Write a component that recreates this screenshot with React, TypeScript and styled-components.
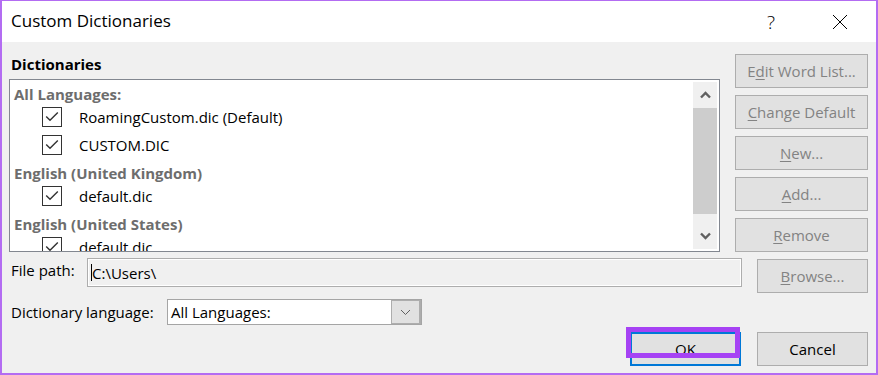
import React from "react";
import styled, { createGlobalStyle } from "styled-components";

const GlobalStyle = createGlobalStyle`
  html, body {
    margin: 0;
    padding: 0;
    background: #ffffff;
  }
  body {
    font-family: "Open Sans", "Noto Sans", sans-serif;
  }
`;

const Frame = styled.div`
  width: 878px;
  height: 375px;
  box-sizing: border-box;
  border: 2px solid #b36cf2;
  border-top-width: 1px;
  background: #f0f0f0;
  display: flex;
  flex-direction: column;
  font-family: "Open Sans", "Noto Sans", sans-serif;
  color: #000;
  overflow: hidden;
`;

const TitleBar = styled.div`
  height: 41px;
  flex: none;
  background: #ffffff;
  display: flex;
  align-items: center;
  padding: 0 13px 0 9px;
`;

const Title = styled.div`
  flex: 1;
  font-size: 17px;
  line-height: 24px;
  margin-top: -1px;
`;

const TitleButton = styled.div`
  width: 46px;
  height: 30px;
  display: flex;
  align-items: center;
  justify-content: center;
  font-size: 19px;
  font-weight: 300;
`;

const Body = styled.div`
  flex: 1;
  display: flex;
  flex-direction: column;
  padding: 12px 8px 7px 7px;
`;

const Main = styled.div`
  display: flex;
  gap: 15px;
`;

const LeftColumn = styled.div`
  flex: 1;
  display: flex;
  flex-direction: column;
`;

const Heading = styled.div`
  font-size: 15px;
  font-weight: 700;
  line-height: 20px;
  height: 25px;
  padding-left: 2px;
`;

const ListBox = styled.div`
  height: 173px;
  box-sizing: border-box;
  border: 1px solid #828790;
  background: #ffffff;
  display: flex;
`;

const ListContent = styled.div`
  flex: 1;
  overflow: hidden;
`;

const GroupRow = styled.div`
  height: 23px;
  box-sizing: border-box;
  padding: 5px 0 0 4px;
  font-size: 15px;
  font-weight: 700;
  line-height: 18px;
  color: #6d6d6d;
`;

const ItemRow = styled.div`
  height: 28px;
  display: flex;
  align-items: center;
  padding-left: 32px;
  gap: 17px;
  font-size: 15px;
`;

const CheckBox = styled.span`
  width: 20px;
  height: 20px;
  box-sizing: border-box;
  border: 1px solid #333333;
  background: #fff;
  display: flex;
  align-items: center;
  justify-content: center;
`;

const ScrollBar = styled.div`
  width: 24px;
  margin: 2px 2px 2px 0;
  background: #f0f0f0;
  display: flex;
  flex-direction: column;
`;

const ScrollArrow = styled.div`
  height: 26px;
  display: flex;
  align-items: center;
  justify-content: center;
`;

const ScrollThumb = styled.div`
  height: 106px;
  background: #cdcdcd;
`;

const ScrollGap = styled.div`
  flex: 1;
`;

const ButtonColumn = styled.div`
  width: 133px;
  display: flex;
  flex-direction: column;
  gap: 7px;
`;

const Button = styled.button<{ $disabled?: boolean; $default?: boolean; $width?: number }>`
  width: ${(p) => (p.$width ? `${p.$width}px` : "100%")};
  height: 34px;
  box-sizing: border-box;
  background: #e1e1e1;
  border: ${(p) => (p.$default ? "2px solid #0078d7" : "1px solid #adadad")};
  color: ${(p) => (p.$disabled ? "#838383" : "#000")};
  font-family: "Open Sans", "Noto Sans", sans-serif;
  font-size: 15px;
  padding: 0;
  flex: none;
  position: relative;

  u {
    text-decoration-thickness: 1px;
    text-underline-offset: 2px;
  }
`;

const FieldRow = styled.div<{ $top: number }>`
  display: flex;
  align-items: flex-start;
  margin-top: ${(p) => p.$top}px;
`;

const Label = styled.div<{ $width: number; $lh: number }>`
  width: ${(p) => p.$width}px;
  flex: none;
  box-sizing: border-box;
  padding-left: 2px;
  font-size: 15px;
  line-height: ${(p) => p.$lh}px;
`;

const PathInput = styled.div`
  flex: 1;
  height: 29px;
  box-sizing: border-box;
  border: 1px solid #adadad;
  box-shadow: inset 0 0 0 1px #ffffff;
  background: #f0f0f0;
  display: flex;
  align-items: center;
  padding-left: 3px;
  font-size: 15px;
  margin-right: 15px;
`;

const Caret = styled.span`
  width: 1px;
  height: 17px;
  background: #000;
`;

const Combo = styled.div`
  width: 255px;
  height: 26px;
  box-sizing: border-box;
  border: 1px solid #a5a5a5;
  background: #fff;
  display: flex;
`;

const ComboText = styled.div`
  flex: 1;
  padding-left: 3px;
  font-size: 15px;
  line-height: 24px;
`;

const ComboButton = styled.div`
  width: 27px;
  background: #e1e1e1;
  border: 1px solid #adadad;
  border-right-width: 2px;
  display: flex;
  align-items: center;
  justify-content: center;
`;

const Footer = styled.div`
  display: flex;
  justify-content: flex-end;
  gap: 16px;
  margin-top: 7px;
`;

const Highlight = styled.span`
  position: absolute;
  left: -6px;
  top: -7px;
  width: 114px;
  height: 31px;
  box-sizing: border-box;
  border: 5px solid #a642f4;
  pointer-events: none;
`;

const Check = () => (
  <svg width="18" height="18" viewBox="0 0 18 18">
    <polyline points="3.2,8.5 7,12.3 14.8,4.5" fill="none" stroke="#333" strokeWidth="1.4" />
  </svg>
);

const Chevron = ({ up }: { up?: boolean }) => (
  <svg width="11" height="8" viewBox="0 0 11 8">
    <polyline
      points={up ? "1,6.5 5.5,2 10,6.5" : "1,1.5 5.5,6 10,1.5"}
      fill="none"
      stroke="#606060"
      strokeWidth="2.4"
    />
  </svg>
);

const groups = [
  { name: "All Languages:", files: ["RoamingCustom.dic (Default)", "CUSTOM.DIC"] },
  { name: "English (United Kingdom)", files: ["default.dic"] },
  { name: "English (United States)", files: ["default.dic"] },
];

export default function App() {
  return (
    <>
      <GlobalStyle />
      <Frame>
        <TitleBar>
          <Title>Custom Dictionaries</Title>
          <TitleButton>?</TitleButton>
          <div style={{ width: 23 }} />
          <TitleButton>
            <svg width="16" height="16" viewBox="0 0 16 16">
              <path d="M1 1 L15 15 M15 1 L1 15" stroke="#000" strokeWidth="1" />
            </svg>
          </TitleButton>
        </TitleBar>
        <Body>
          <Main>
            <LeftColumn>
              <Heading>Dictionaries</Heading>
              <ListBox>
                <ListContent>
                  {groups.map((g) => (
                    <React.Fragment key={g.name}>
                      <GroupRow>{g.name}</GroupRow>
                      {g.files.map((f) => (
                        <ItemRow key={f}>
                          <CheckBox>
                            <Check />
                          </CheckBox>
                          {f}
                        </ItemRow>
                      ))}
                    </React.Fragment>
                  ))}
                </ListContent>
                <ScrollBar>
                  <ScrollArrow>
                    <Chevron up />
                  </ScrollArrow>
                  <ScrollThumb />
                  <ScrollGap />
                  <ScrollArrow>
                    <Chevron />
                  </ScrollArrow>
                </ScrollBar>
              </ListBox>
            </LeftColumn>
            <ButtonColumn>
              <Button $disabled>
                E<u>d</u>it Word List...
              </Button>
              <Button $disabled>
                <u>C</u>hange Default
              </Button>
              <Button $disabled>
                <u>N</u>ew...
              </Button>
              <Button $disabled>
                <u>A</u>dd...
              </Button>
              <Button $disabled>
                <u>R</u>emove
              </Button>
            </ButtonColumn>
          </Main>
          <FieldRow $top={6}>
            <Label $width={78} $lh={24}>
              File path:
            </Label>
            <PathInput>
              <Caret />
              C:\Users\
            </PathInput>
            <Button $disabled $width={111} style={{ marginTop: 1 }}>
              <u>B</u>rowse...
            </Button>
          </FieldRow>
          <FieldRow $top={6}>
            <Label $width={158} $lh={26}>
              Dictionary language:
            </Label>
            <Combo>
              <ComboText>All Languages:</ComboText>
              <ComboButton>
                <svg width="11" height="7" viewBox="0 0 11 7">
                  <polyline points="1,1 5.5,5.5 10,1" fill="none" stroke="#606060" strokeWidth="1" />
                </svg>
              </ComboButton>
            </Combo>
          </FieldRow>
          <Footer>
            <Button $default $width={111}>
              OK
              <Highlight />
            </Button>
            <Button $width={111}>Cancel</Button>
          </Footer>
        </Body>
      </Frame>
    </>
  );
}
